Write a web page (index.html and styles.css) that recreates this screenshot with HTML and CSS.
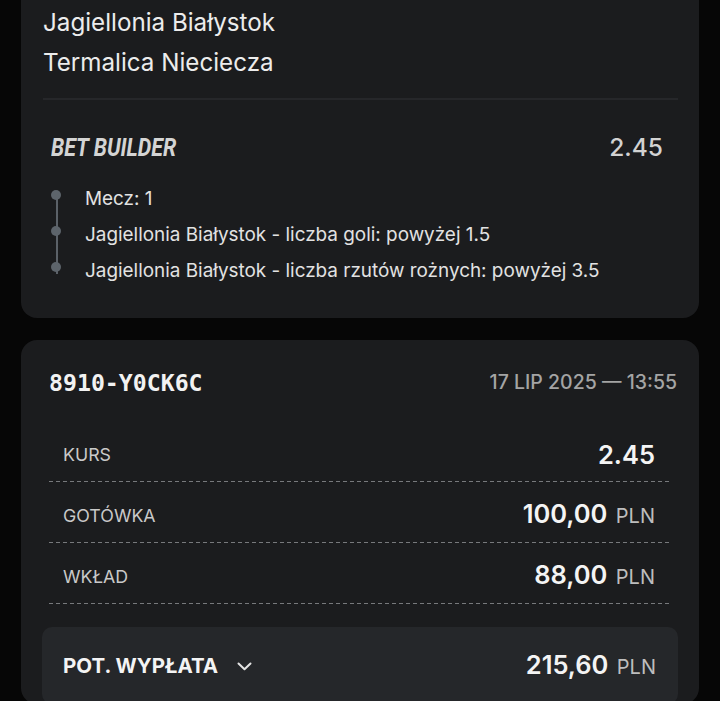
FILE: index.html
```html
<!DOCTYPE html>
<html lang="pl">
<head>
  <meta charset="UTF-8">
  <title>Kupon</title>
  <link rel="stylesheet" href="styles.css">
</head>
<body>
  <div class="page">
    <section class="card event-card">
      <div class="teams">
        <div class="team">Jagiellonia Białystok</div>
        <div class="team">Termalica Nieciecza</div>
      </div>

      <div class="bb-head">
        <span class="bb-title">BET BUILDER</span>
        <span class="bb-odds">2.45</span>
      </div>

      <ul class="timeline">
        <li>Mecz: 1</li>
        <li>Jagiellonia Białystok - liczba goli: powyżej 1.5</li>
        <li>Jagiellonia Białystok - liczba rzutów rożnych: powyżej 3.5</li>
      </ul>
    </section>

    <section class="card ticket-card">
      <div class="ticket-head">
        <span class="ticket-id">8910-Y0CK6C</span>
        <span class="ticket-date">17 LIP 2025 — 13:55</span>
      </div>

      <div class="rows">
        <div class="row">
          <span class="label">KURS</span>
          <span class="value">2.45</span>
        </div>
        <div class="row">
          <span class="label">GOTÓWKA</span>
          <span class="value">100,00 <small>PLN</small></span>
        </div>
        <div class="row">
          <span class="label">WKŁAD</span>
          <span class="value">88,00 <small>PLN</small></span>
        </div>
      </div>

      <div class="payout">
        <span class="payout-label">
          POT. WYPŁATA
          <svg class="chevron" width="15" height="9" viewBox="0 0 15 9">
            <path d="M1.5 1.5 L7.5 7.3 L13.5 1.5" fill="none" stroke="#e4e4e4" stroke-width="2" stroke-linecap="round" stroke-linejoin="round"/>
          </svg>
        </span>
        <span class="value">215,60 <small>PLN</small></span>
      </div>
    </section>
  </div>
</body>
</html>
```

FILE: styles.css
```css
html, body {
  margin: 0;
  padding: 0;
}

body {
  background-color: #060606;
  color: #e6e6e6;
  font-family: Inter, "Noto Sans", sans-serif;
  height: 701px;
  overflow: hidden;
}

.page {
  padding: 0 21px;
  display: flex;
  flex-direction: column;
  gap: 22px;
}

.card {
  background-color: #1b1c1e;
  border-radius: 16px;
}

/* event card, top is cut off by the screen */
.event-card {
  border-radius: 0 0 16px 16px;
  padding: 3px 21px 29px 22px;
}

.teams {
  padding-bottom: 15px;
  border-bottom: 2px solid #26272a;
}

.team {
  font-size: 24.2px;
  line-height: 40px;
  color: #ececec;
}

.bb-head {
  display: flex;
  justify-content: space-between;
  align-items: center;
  height: 40px;
  margin-top: 27px;
  padding: 0 15px 0 8px;
}

.bb-title {
  font-family: Roboto, sans-serif;
  font-weight: 700;
  font-style: italic;
  font-size: 25px;
  color: #d4d4d4;
  display: inline-block;
  transform: scaleX(0.855);
  transform-origin: left center;
}

.bb-odds {
  font-size: 24.5px;
  font-weight: 500;
  color: #d2d2d2;
}

.timeline {
  list-style: none;
  margin: 14px 0 0;
  padding: 0 0 0 42px;
  position: relative;
}

.timeline::before {
  content: "";
  position: absolute;
  left: 13px;
  top: 10px;
  bottom: 15px;
  width: 2px;
  background-color: #5b6168;
}

.timeline li {
  position: relative;
  font-size: 18.9px;
  line-height: 36px;
  color: #e2e2e2;
}

.timeline li::before {
  content: "";
  position: absolute;
  left: -34px;
  top: 9px;
  width: 10px;
  height: 10px;
  border-radius: 50%;
  background-color: #5d646b;
}

/* ticket card */
.ticket-card {
  padding: 27px 21px 0;
}

.ticket-head {
  display: flex;
  justify-content: space-between;
  align-items: center;
  height: 30px;
  padding: 0 1px 0 7px;
}

.ticket-id {
  font-family: "DejaVu Sans Mono", monospace;
  font-weight: 700;
  font-size: 23.2px;
  color: #f2f2f2;
}

.ticket-date {
  font-size: 19.5px;
  font-weight: 500;
  color: #a4a4a4;
}

.rows {
  margin: 25px 9px 0 7px;
}

.row {
  display: flex;
  justify-content: space-between;
  align-items: center;
  box-sizing: border-box;
  height: 61px;
  padding: 6px 14px 1px;
  background-image: linear-gradient(to right, #77797c 4px, transparent 4px);
  background-size: 7px 1px;
  background-repeat: repeat-x;
  background-position: left bottom;
}

.row:first-child {
  height: 60px;
}

.label {
  font-size: 17.8px;
  color: #c9c9c9;
}

.value {
  font-size: 25.5px;
  font-weight: 600;
  line-height: 30px;
  color: #f4f4f4;
}

.value small {
  font-size: 20px;
  font-weight: 400;
  color: #bdbdbd;
  margin-left: 2px;
}

.payout {
  display: flex;
  justify-content: space-between;
  align-items: center;
  margin-top: 23px;
  background-color: #25272a;
  border-radius: 10px;
  padding: 23px 22px 22px 21px;
  line-height: 30px;
}

.payout-label {
  display: flex;
  align-items: center;
  gap: 19px;
  font-size: 20.5px;
  font-weight: 700;
  color: #f4f4f4;
}
```
